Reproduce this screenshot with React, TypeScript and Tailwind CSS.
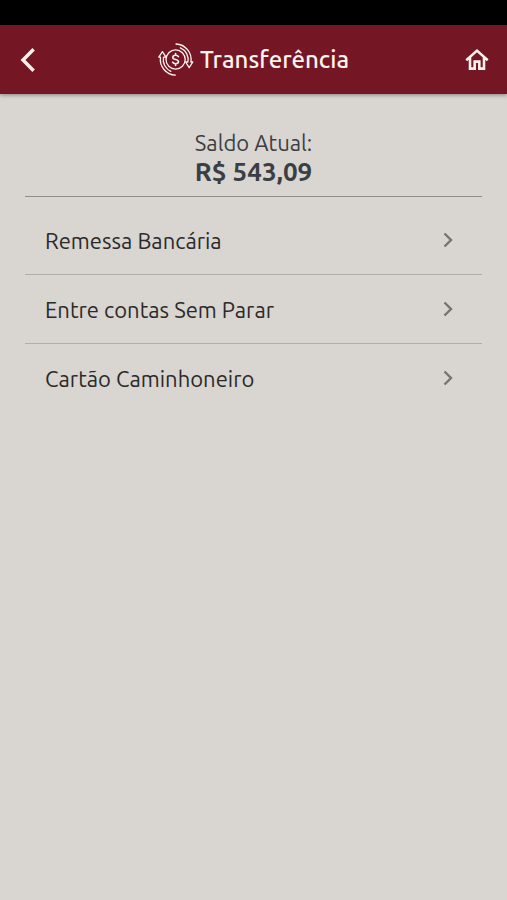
import React from "react";

const options = [
  { label: "Remessa Bancária", href: "#remessa" },
  { label: "Entre contas Sem Parar", href: "#entre-contas" },
  { label: "Cartão Caminhoneiro", href: "#cartao" },
];

function TransferIcon() {
  return (
    <svg
      className="w-9 h-9 shrink-0"
      viewBox="0 0 36 36"
      fill="none"
      stroke="currentColor"
      strokeWidth="1.3"
      strokeLinecap="round"
      strokeLinejoin="round"
      aria-hidden="true"
    >
      <circle cx="17.6" cy="17.5" r="9.6" />
      {/* right arrow, pointing down */}
      <path d="M18 2A15.6 15.6 0 0 1 32.9 20H34.8L31.2 25.6L27.6 20H29.9A12.8 12.8 0 0 0 22.4 5.8" />
      {/* left arrow, pointing up */}
      <path d="M17.4 33.1A15.6 15.6 0 0 1 2.5 15.2H0.8L4.4 9.6L8 15.2H5.5A12.8 12.8 0 0 0 12.8 29.4" />
      <path
        d="M20.4 14.7C19.9 13.7 18.9 13.3 17.6 13.3C15.9 13.3 14.8 14.1 14.8 15.4C14.8 18.2 20.5 16.6 20.5 19.6C20.5 20.9 19.3 21.7 17.6 21.7C16.2 21.7 15.1 21.2 14.6 20.2M17.6 11.5V13.3M17.6 21.7V23.5"
        strokeWidth="1.6"
      />
    </svg>
  );
}

export default function App() {
  return (
    <div className="min-h-screen flex flex-col bg-[#d9d5d1] font-['Ubuntu','Noto_Sans',sans-serif]">
      <div className="h-[25px] bg-black" />
      <header className="h-[69px] px-4 flex items-center justify-between bg-[#751624] text-[#fff3ee] shadow-[0_1px_4px_rgba(0,0,0,0.4)]">
        <button type="button" aria-label="Voltar" className="w-7 h-9 flex items-center justify-start">
          <svg className="w-6 h-7" viewBox="0 0 24 28" fill="none" stroke="currentColor" strokeWidth="3.4" aria-hidden="true">
            <path d="M17.6 3.2L7 14L17.6 24.8" />
          </svg>
        </button>
        <h1 className="flex items-center gap-1.5 text-2xl font-medium">
          <TransferIcon />
          Transferência
        </h1>
        <a href="#inicio" aria-label="Início" className="w-7 h-9 flex items-center justify-center">
          <svg className="w-7 h-7" viewBox="0 0 24 24" fill="none" stroke="currentColor" strokeWidth="2.2" aria-hidden="true">
            <path d="M2.8 12.2L12 4L21.2 12.2M6 10V19.4H10V13.4H14V19.4H18V10" />
          </svg>
        </a>
      </header>
      <main className="px-[25px] pt-[35px]">
        <div className="pb-[9px] text-center text-[#3b3f43] border-b border-[#8f8c89]">
          <p className="text-[22px] leading-7">Saldo Atual:</p>
          <p className="text-[26px] leading-[30px] font-bold">R$ 543,09</p>
        </div>
        <ul className="pt-[9px]">
          {options.map((option) => (
            <li key={option.href} className="border-b border-[#b0adaa] last:border-b-0">
              <a
                href={option.href}
                className="h-[68px] pl-5 pr-6 flex items-center justify-between text-[22px] text-[#2b2a29]"
              >
                {option.label}
                <svg className="w-5 h-5" viewBox="0 0 20 20" fill="none" stroke="#777471" strokeWidth="2.4" aria-hidden="true">
                  <path d="M6.5 3.5L13 10L6.5 16.5" />
                </svg>
              </a>
            </li>
          ))}
        </ul>
      </main>
    </div>
  );
}
